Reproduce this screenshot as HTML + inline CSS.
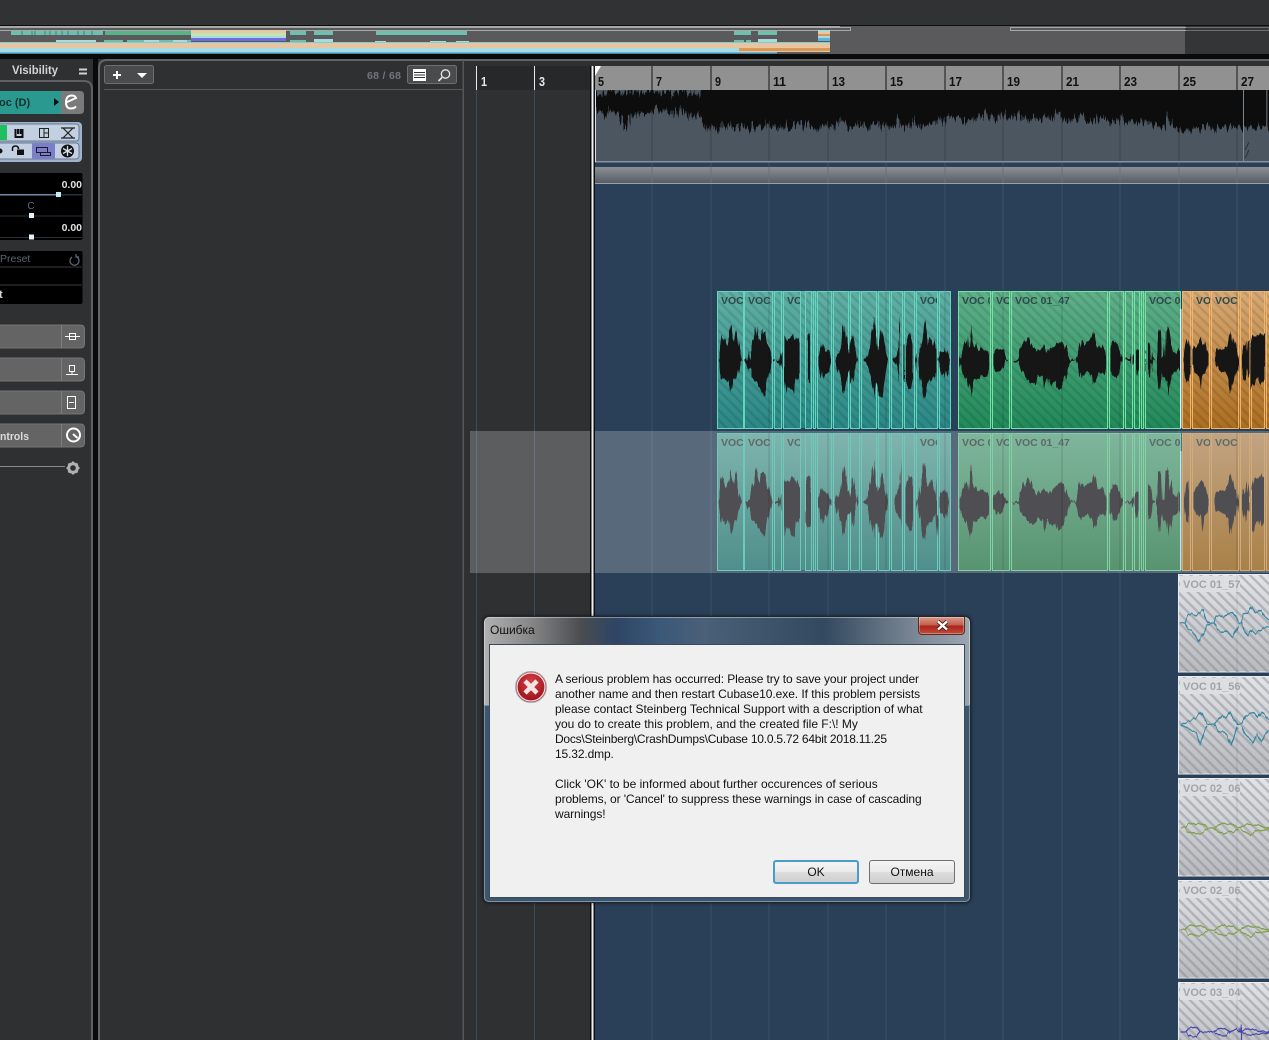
<!DOCTYPE html>
<html><head><meta charset="utf-8"><style>
html,body{margin:0;padding:0;background:#2f3032;width:1269px;height:1040px;overflow:hidden}
svg{position:absolute;left:0;top:0}
text{font-family:"Liberation Sans",sans-serif}
#dlg{position:absolute;left:483px;top:616px;width:488px;height:287px;box-sizing:border-box;border-radius:6px;border:1px solid #20262c;box-shadow:0 0 3px rgba(0,0,0,.6),inset 0 0 0 1px rgba(255,255,255,.4);
background:linear-gradient(90deg,#b0b0b0 0,#8a8a8a 9%,#4a4c50 20%,#2e4564 27%,#3a5878 36%,#4a6078 45%,#33495f 70%,#7f8c99 90%,#9aa6b2 100%);font-family:"Liberation Sans","Noto Sans CJK SC",sans-serif;color:#000}
#f1{position:absolute;left:0;top:88px;width:100%;bottom:0;border-radius:0 0 5px 5px;background:#3b5670;box-shadow:inset 0 0 0 1px rgba(255,255,255,.35)}
#t{position:absolute;left:6px;top:6px;font-size:12px;line-height:15px;color:#111}
#x{position:absolute;left:434px;top:0;width:47px;height:18px;border:1px solid #5c2a22;border-top:0;border-radius:0 0 4px 4px;box-sizing:border-box;background:linear-gradient(180deg,#d99a8c 0,#c4604e 45%,#a8241a 55%,#c44c3a 100%);box-shadow:inset 0 0 0 1px rgba(255,255,255,.3)}
#c{position:absolute;left:5px;top:27px;width:476px;height:254px;box-sizing:border-box;background:#f0f0f0;border:1px solid #3c4a58}
#c div.l{position:absolute;left:65px;white-space:nowrap;font-size:12px;line-height:15px;color:#111}
.b{position:absolute;top:215px;width:86px;height:24px;box-sizing:border-box;border-radius:3px;text-align:center;font-size:12px;line-height:22px;color:#111;background:linear-gradient(180deg,#f4f4f4 0,#ebebeb 48%,#dcdcdc 52%,#cfcfcf 100%)}
</style></head><body>
<svg width="1269" height="1040" viewBox="0 0 1269 1040" xmlns="http://www.w3.org/2000/svg">
<defs>
<filter id="jag" filterUnits="userSpaceOnUse" x="590" y="60" width="690" height="530"><feTurbulence type="fractalNoise" baseFrequency="0.55 0.004" numOctaves="2" seed="4" result="n"/><feDisplacementMap in="SourceGraphic" in2="n" scale="16" xChannelSelector="R" yChannelSelector="G"/></filter>
<filter id="jagw" filterUnits="userSpaceOnUse" x="700" y="280" width="580" height="300"><feTurbulence type="fractalNoise" baseFrequency="0.45 0.004" numOctaves="1" seed="4" result="n"/><feDisplacementMap in="SourceGraphic" in2="n" scale="8" xChannelSelector="R" yChannelSelector="G"/></filter>
<filter id="jag2" filterUnits="userSpaceOnUse" x="1170" y="570" width="110" height="480"><feTurbulence type="fractalNoise" baseFrequency="0.4 0.004" numOctaves="1" seed="9" result="n"/><feDisplacementMap in="SourceGraphic" in2="n" scale="4" xChannelSelector="R" yChannelSelector="G"/></filter>
<clipPath id="topc"><rect x="596" y="90" width="673" height="72"/></clipPath>
<linearGradient id="gt" x1="0" y1="0" x2="0" y2="1"><stop offset="0" stop-color="#60b0a4"/><stop offset="1" stop-color="#2a8886"/></linearGradient>
<linearGradient id="gg" x1="0" y1="0" x2="0" y2="1"><stop offset="0" stop-color="#60b08a"/><stop offset="1" stop-color="#218a5a"/></linearGradient>
<linearGradient id="go" x1="0" y1="0" x2="0" y2="1"><stop offset="0" stop-color="#d8aa76"/><stop offset="1" stop-color="#ac6e20"/></linearGradient>
<linearGradient id="lt" x1="0" y1="0" x2="0" y2="1"><stop offset="0" stop-color="#80b4ae"/><stop offset="1" stop-color="#4f8f8b"/></linearGradient>
<linearGradient id="lg" x1="0" y1="0" x2="0" y2="1"><stop offset="0" stop-color="#7fb69c"/><stop offset="1" stop-color="#589470"/></linearGradient>
<linearGradient id="lo" x1="0" y1="0" x2="0" y2="1"><stop offset="0" stop-color="#c2a482"/><stop offset="1" stop-color="#a98048"/></linearGradient>
<linearGradient id="gr" x1="0" y1="0" x2="0" y2="1"><stop offset="0" stop-color="#e2e4e8"/><stop offset="1" stop-color="#b8babe"/></linearGradient>
<linearGradient id="band" x1="0" y1="0" x2="0" y2="1"><stop offset="0" stop-color="#8c9094"/><stop offset="1" stop-color="#565d66"/></linearGradient>
<pattern id="h" width="7" height="7" patternUnits="userSpaceOnUse" patternTransform="rotate(-45)"><rect width="2.5" height="7" fill="#000" fill-opacity=".1"/></pattern>
<pattern id="hg" width="7" height="7" patternUnits="userSpaceOnUse" patternTransform="rotate(-45)"><rect width="2.5" height="7" fill="#80848c" fill-opacity=".42"/></pattern>
<path id="bt" d="M717.5 291.5h26v137h-26zM744.5 291.5h28v137h-28zM774.5 291.5h7v137h-7zM783.5 291.5h17v137h-17zM805.500 291.5h6v137h-6zM813.500 291.5h2v137h-2zM817.500 291.5h14v137h-14zM833.500 291.5h15v137h-15zM850.500 291.5h9v137h-9zM861.500 291.5h15v137h-15zM878.500 291.5h11v137h-11zM891.500 291.5h11v137h-11zM904.500 291.5h10v137h-10zM916.500 291.5h21v137h-21zM939.500 291.5h11v137h-11z"/>
<path id="bg" d="M958.500 291.5h32v137h-32zM992.500 291.5h17v137h-17zM1011.500 291.5h96v137h-96zM1109.500 291.5h14v137h-14zM1125.500 291.5h7v137h-7zM1134.500 291.5h5v137h-5zM1141.500 291.5h2v137h-2zM1145.500 291.5h35v137h-35z"/>
<path id="bo" d="M1182.500 291.5h8v137h-8zM1192.500 291.5h17v137h-17zM1211.500 291.5h27v137h-27zM1240.500 291.5h9v137h-9zM1251.500 291.5h13v137h-13zM1266.500 291.5h6v137h-6z"/>
<path id="wave" d="M718 360L720 350 722 335 724 338 726 346 728 340 730 330 731 326 732 336 734 342 736 330 738 345 740 355 742 360 740 366 738 372 736 380 734 378 732 390 731 393 730 388 728 378 726 382 724 378 722 380 720 370ZM745 360L749 358 750 352 752 345 754 340 756 326 758 335 760 342 762 332 764 330 766 340 768 345 770 350 772 360 770 370 768 378 766 385 764 395 762 392 760 388 758 385 756 382 752 378 750 368 745 361ZM775 359H779L781 350V370L779 361H775ZM784 360V337L786 340 790 338 793 335 795 340 797 338 800 346V374L798 380 796 378 794 395 790 390 787 385 785 394 784 382ZM806 336L808 334 811 337V383L808 385 806 380ZM818 355L820 351 823 345 825 352 828 350 831 358V362L828 372 825 375 823 381 820 370 818 365ZM834 360L836 356 840 350 842 340 844 324 846 335 848 348 850 355 852 345 853 335 855 345 857 352 858 360 856 368 854 375 852 385 851 370 848 372 846 382 844 393 842 385 840 378 836 366ZM862 360L866 358 868 350 870 345 872 330 874 317 876 335 878 350 880 345 882 330 884 342 886 352 888 360 886 370 884 385 882 397 880 395 878 385 876 380 874 398 872 385 870 375 866 362ZM893 360L896 352 899 347 900 340 901 317V396L900 378 896 368ZM905 345L908 338 910 333 912 340 913 345V378L911 390 908 385 905 380ZM917 360L919 350 921 340 923 330 924 320 926 335 928 345 930 340 932 337 934 345 936 355 937 335V395L936 372 934 375 932 380 928 382 926 388 924 398 921 385 919 375ZM939 360L941 352 945 347 948 355 950 360 948 366 945 377 941 370ZM959 360L961 352 964 345 966 340 968 348 970 322 972 340 975 345 978 350 981 347 984 349 988 352 990 355V370L986 377 982 375 978 378 974 380 970 396 967 380 964 378 961 370ZM993 355L998 349 1003 352 1005 357 1009 360 1005 362 1002 370 998 373 993 365ZM1012 360H1018L1020 350 1024 342 1027 340 1029 336 1032 345 1036 352 1040 350 1044 346 1048 352 1052 348 1056 345 1060 340 1064 342 1067 350 1069 358 1074 360 1069 362 1067 372 1064 382 1060 389 1058 388 1056 380 1052 385 1048 378 1044 390 1042 378 1038 376 1034 384 1029 380 1026 376 1022 372 1018 362 1012 361ZM1075 360L1078 350 1080 340 1084 346 1088 342 1091 340 1094 332 1096 340 1098 348 1102 345 1105 350 1107 358V368L1104 374 1100 372 1097 378 1094 387 1092 378 1088 372 1084 375 1080 378 1078 370ZM1110 350L1113 342 1117 343 1120 350 1123 360 1120 370 1116 378 1113 377 1110 370ZM1126 359H1132L1133 354V366L1132 361H1126ZM1135 352L1137 349 1139 352V370L1137 376 1135 368ZM1147 345L1149 342 1151 345 1152 358 1156 360 1152 362 1151 375 1149 378 1147 370ZM1157 358L1158 345 1159 328 1161 332 1162 358H1164L1165 330 1167 325 1169 330 1171 345 1173 352 1176 355 1180 350V370L1176 372 1172 375 1170 385 1168 396 1166 380 1163 378 1162 372 1160 390 1159 385 1157 375ZM1184 360L1186 345 1188 338 1190 350V372L1188 382 1186 378ZM1193 350L1197 345 1200 340 1202 337 1204 342 1207 350 1209 360 1207 370 1204 375 1202 390 1200 375 1196 372 1193 365ZM1213 360L1216 350 1220 348 1224 349 1228 342 1230 335 1231 331 1233 340 1236 350 1238 360 1236 370 1234 378 1231 393 1229 378 1224 372 1220 370 1216 368ZM1242 358L1245 345 1248 340 1249 352V368L1247 378 1245 380 1242 365ZM1252 345L1254 335 1258 337 1261 332 1264 335V380L1261 385 1258 378 1254 385 1252 390Z"/>
</defs>

<!-- top bars -->
<rect width="1269" height="25" fill="#313234"/>
<rect y="25" width="1269" height="1" fill="#0e0e0e"/>
<rect y="26" width="1185" height="28" fill="#5a5a5c"/>
<rect x="1185" y="26" width="84" height="28" fill="#343537"/>
<rect y="54" width="1269" height="5" fill="#0b0b0b"/>
<rect y="26" width="840" height="1.4" fill="#a8a8a8"/>
<path d="M0 27.5H850.5V30.5H0M1269 27.5H1010.5V30.5H1269" fill="none" stroke="#a6a8a8"/>
<path d="M1186 27.5H1269V30.5H1186" fill="none" stroke="#6c6e70"/>
<!-- overview -->
<rect x="11" y="31" width="92" height="4" fill="#6dc0b0"/>
<path d="M22 31v4M32 31v4M35 31v4M45 31v4M50 31v4M56 31v4M62 31v4M68 31v4M78 31v4M84 31v4M92 31v4" stroke="#4a7a72"/>
<rect x="105" y="31" width="86" height="4" fill="#58b488"/>
<rect x="191" y="30" width="95" height="3" fill="#e8c8a4"/><rect x="191" y="33" width="95" height="3" fill="#c4e2b4"/><rect x="191" y="36" width="95" height="2" fill="#a8dcdc"/><rect x="191" y="38" width="95" height="3" fill="#6c6ce0"/>
<path d="M290 31h16v4h-16zM314 31h19v4h-19zM376 31h91v4h-91zM734 31h17v4h-17zM758 31h19v4h-19z" fill="#6dc0b0"/>
<path d="M104 40h19v3h-19zM127 40h17v3h-17zM159 40h14v3h-14zM187 40h4v3h-4zM290 40h16v3h-16zM734 40h10v3h-10zM746 40h5v3h-5z" fill="#6dc0b0"/>
<path d="M56 40h40v3h-40zM144 40h15v3h-15zM173 40h14v3h-14zM314 39h19v4h-19zM375 41h11v2h-11zM430 41h16v2h-16zM456 41h13v2h-13zM758 39h19v4h-19z" fill="#a4dce0"/>
<rect x="818" y="30" width="12" height="2" fill="#a8dcdc"/><rect x="818" y="32" width="12" height="2" fill="#e8c8a4"/><rect x="818" y="34" width="12" height="2" fill="#d89858"/><rect x="818" y="36" width="12" height="2" fill="#a8dcdc"/><rect x="818" y="38" width="12" height="3" fill="#5cb4dc"/>
<rect y="42" width="830" height="1" fill="#7cd0d0"/>
<rect y="43" width="830" height="5" fill="#e8c4a0"/>
<rect y="48" width="739" height="4" fill="#a2dce8"/>
<rect x="739" y="48" width="91" height="3" fill="#d89858"/><rect x="739" y="51" width="91" height="1" fill="#e8c4a0"/>
<rect y="52" width="777" height="1.4" fill="#60b8e0"/>

<!-- left panel -->
<rect x="0" y="60" width="92" height="980" fill="#2f3032"/>
<path d="M0 81H84Q92 81 92 89V1040" fill="none" stroke="#5f6062" stroke-width="2"/>
<rect x="93" y="59" width="5" height="981" fill="#0a0a0a"/>
<path d="M99 1040V68Q99 60 107 60H1269" fill="none" stroke="#646566" stroke-width="2"/>
<text x="12" y="74" font-size="11.500" font-weight="bold" fill="#d4d4d4" textLength="46" lengthAdjust="spacingAndGlyphs">Visibility</text>
<path d="M79 69.5h8M79 73.5h8" stroke="#d0d0d0" stroke-width="2"/>
<rect x="-4" y="91" width="65" height="23" fill="#2a9a90"/>
<text x="-1" y="106" font-size="11" font-weight="bold" fill="#16302e">oc (D)</text>
<path d="M54 98l5 4-5 4z" fill="#111"/>
<path d="M61 91h19q4 0 4 4v15q0 4-4 4H61z" fill="#7a7a7a"/>
<path d="M66 102.500l10-4.500q-1-2.500-4-2.500-6 0-6 7 0 6 5 6 3 0 5-2" fill="none" stroke="#fff" stroke-width="2"/>
<rect x="-4" y="122" width="86" height="40" rx="4" fill="#9fb3cc"/>
<rect x="-4" y="124" width="83" height="17" rx="3" fill="#c3d0e2" stroke="#6a7a90"/>
<rect x="-4" y="143" width="83" height="16" rx="3" fill="#c3d0e2" stroke="#6a7a90"/>
<rect x="-2" y="125" width="9" height="15" fill="#1fbf62"/>
<path d="M15.500 129v8h7v-8M18 129v5M20.500 129v5" fill="none" stroke="#111" stroke-width="2"/>
<path d="M39.500 128.500h9v9h-9zM44 128.500v9M44 133h4.500" fill="none" stroke="#222"/>
<path d="M61 128h14M61 138h14M63 128l10 10M73 128l-10 10" fill="none" stroke="#222" stroke-width="1.200"/>
<rect x="32" y="143" width="23" height="16" rx="2" fill="#7b7fc8"/>
<path d="M36.500 147.500h11v5h-11zM40.500 152.500h10v3h-10z" fill="none" stroke="#1a1a2a"/>
<circle cx="0" cy="151" r="2.500" fill="#111"/>
<path d="M12.500 151v-2.500q0-2.500 3-2.500t3 3" fill="none" stroke="#111" stroke-width="1.500"/><rect x="17" y="149.500" width="7" height="5.500" fill="#111"/>
<circle cx="67.500" cy="151" r="6.500" fill="#111"/>
<path d="M67.500 146v10M63 148.500l9 5M72 148.500l-9 5" stroke="#d8e0ee" stroke-width="1.300"/>
<rect x="-4" y="173" width="86.500" height="67" rx="2" fill="#000"/>
<text x="82" y="188" font-size="10.500" font-weight="bold" fill="#e0e0e0" text-anchor="end">0.00</text>
<text x="82" y="231" font-size="10.500" font-weight="bold" fill="#e0e0e0" text-anchor="end">0.00</text>
<text x="31" y="209" font-size="10" fill="#5a6c88" text-anchor="middle">C</text>
<rect x="0" y="194" width="58" height="1.500" fill="#6f8ca8"/><rect x="58" y="194" width="24" height="1.500" fill="#2a3038"/>
<rect x="0" y="215.500" width="82" height="1" fill="#2a3038"/><rect x="0" y="237" width="82" height="1" fill="#2a3038"/>
<rect x="56" y="192" width="5" height="5" fill="#c8eaf4"/><rect x="29" y="213" width="5" height="5" fill="#e4f2f6"/><rect x="29" y="234.500" width="5" height="5" fill="#e4f2f6"/>
<rect x="-4" y="251" width="86.500" height="53" rx="2" fill="#000"/>
<path d="M0 267h82M0 285h82" stroke="#3a3a3a"/>
<text x="0" y="262" font-size="10.500" fill="#5c6472">Preset</text>
<path d="M72 256a4.500 4.500 0 1 0 4-.500M76 253v3h3" fill="none" stroke="#5f6a7a" stroke-width="1.200" transform="translate(0,1)"/>
<text x="-1" y="298" font-size="11" font-weight="bold" fill="#d8d8d8">t</text>
<g fill="#646464">
<path d="M-4 325H80q4.500 0 4.500 4v15q0 4-4.500 4H-4z" stroke="#757575"/>
<path d="M-4 358H80q4.500 0 4.500 4v15q0 4-4.500 4H-4z" stroke="#757575"/>
<path d="M-4 391H80q4.500 0 4.500 4v15q0 4-4.500 4H-4z" stroke="#757575"/>
<path d="M-4 424H80q4.500 0 4.500 4v15q0 4-4.500 4H-4z" stroke="#757575"/>
</g>
<path d="M61.500 325v23M61.500 358v23M61.500 391v23M61.500 424v23" stroke="#7e7e7e"/>
<path d="M65 336.500h15M69.500 333.500h6v6h-6z" fill="none" stroke="#fff"/>
<path d="M66 374.500h12M69.500 365.500h5v6h-5zM72 371.500v3" fill="none" stroke="#fff"/>
<path d="M67.500 396.500h8v12h-8zM69 402.500h5" fill="none" stroke="#fff"/>
<circle cx="73.500" cy="435" r="6.500" fill="none" stroke="#fff" stroke-width="2"/><path d="M73 434l4.500 4" stroke="#fff" stroke-width="2"/>
<text x="0" y="440" font-size="11" font-weight="bold" fill="#dcdcdc" textLength="29" lengthAdjust="spacingAndGlyphs">ntrols</text>
<rect x="0" y="466" width="65" height="1" fill="#8a8a8a"/>
<circle cx="73" cy="468" r="4.300" fill="none" stroke="#b0b0b0" stroke-width="3"/>
<path d="M73 461.500v2M73 472.500v2M66.500 468h2M77.500 468h2M68.500 463.500l1.500 1.500M76 471l1.500 1.500M77.500 463.500l-1.500 1.500M70 471l-1.500 1.500" stroke="#b0b0b0" stroke-width="2"/>

<!-- middle panel -->
<rect x="104.500" y="65.500" width="49" height="18" rx="2" fill="#4a4b4d" stroke="#6e6e6e"/>
<path d="M113 75h8M117 71v8" stroke="#fff" stroke-width="2"/>
<path d="M137 73h10l-5 5z" fill="#fff"/>
<text x="367" y="79" font-size="10.500" font-weight="bold" fill="#70757c" textLength="34">68 / 68</text>
<rect x="407.500" y="65.500" width="49" height="18" rx="2" fill="#4a4b4d" stroke="#6e6e6e"/>
<rect x="413" y="69" width="13" height="12" fill="#fff"/><path d="M414 72.500h11M414 75h11M414 77.500h11" stroke="#333" stroke-width=".9"/>
<circle cx="445.500" cy="74" r="4.200" fill="none" stroke="#e8e8e8" stroke-width="1.300"/><path d="M442 77.500l-3.500 3.500" stroke="#e8e8e8" stroke-width="1.600"/>
<rect x="104" y="89" width="359" height="1" fill="#595a5c"/>
<rect x="462.500" y="60" width="1.500" height="980" fill="#55565a"/>

<!-- arrange -->
<rect x="464" y="61" width="805" height="5" fill="#2f3032"/>
<rect x="476" y="66" width="116" height="24" fill="#272829"/>
<rect x="594" y="66" width="675" height="24" fill="#919191"/>
<rect x="464" y="90" width="128" height="950" fill="#2f3032"/>
<rect x="595" y="90" width="674" height="950" fill="#2a3f58"/>
<path d="M476.500 90V1040M534.500 90V1040" stroke="#3c4a5e"/>
<path d="M652 90V1040M711 90V1040M769 90V1040M828 90V1040M886 90V1040M945 90V1040M1003 90V1040M1062 90V1040M1120 90V1040M1179 90V1040M1237 90V1040" stroke="#3b5069"/>
<rect x="595" y="90" width="674" height="72" fill="#4c5661"/>
<path d="M652 90V162M711 90V162M769 90V162M828 90V162M886 90V162M945 90V162M1003 90V162M1062 90V162M1120 90V162M1179 90V162M1237 90V162" stroke="#3c434c"/>
<g clip-path="url(#topc)"><g filter="url(#jag)"><path fill="#0d0e0e" d="M596 80L596 107 600 112 604 109 608 118 612 111 616 116 620 113 624 126 627 131 629 118 634 116 640 116 645 112 650 115 655 106 660 112 664 110 668 116 672 110 676 118 680 108 684 117 688 111 692 119 696 112 700 116 703 122 706 131 709 125 711 132 714 123 718 130 721 119 724 128 728 122 732 129 736 126 740 129 744 125 748 131 752 123 756 128 760 127 764 130 767 118 770 127 774 129 778 125 782 130 786 122 790 129 794 127 798 123 802 128 806 121 810 129 814 125 818 131 822 122 826 129 830 126 834 130 838 118 842 128 846 125 850 130 854 123 858 128 862 119 866 130 870 125 874 127 878 117 882 129 886 122 890 126 894 125 898 116 902 129 906 122 910 127 914 116 918 128 922 123 926 126 930 122 934 125 938 118 942 124 946 116 950 117 954 118 958 119 962 120 966 122 970 117 974 123 978 115 982 120 986 111 990 119 994 116 998 122 1002 112 1006 120 1010 116 1014 122 1018 112 1022 120 1026 116 1030 123 1034 114 1038 121 1042 118 1046 120 1050 116 1054 123 1058 112 1062 121 1066 118 1070 123 1074 117 1078 124 1082 114 1086 123 1090 120 1094 124 1098 116 1102 124 1106 118 1110 122 1114 120 1118 123 1122 116 1126 125 1130 120 1134 124 1138 122 1142 124 1146 123 1150 126 1154 123 1158 127 1162 126 1164 128 1166 112 1168 115 1172 125 1176 128 1179 131 1184 128 1190 130 1196 127 1202 129 1208 126 1214 130 1220 125 1226 129 1232 126 1238 128 1242 131 1246 126 1250 129 1256 126 1262 129 1269 127V80H702V84L698 96 695 90 690 95 687 90 682 94 679 90 672 96 669 90 664 95 661 90 656 94 652 90 647 93 643 90 638 96 634 90 628 94 624 90 618 96 614 90 608 94 604 90 600 97 598 90Z"/></g></g>
<rect x="1243" y="90" width="1" height="72" fill="#7c8692"/>
<path d="M1245 150l4-8M1245 158l4-8" stroke="#30363e" stroke-width="1.200"/>
<rect x="595" y="161" width="674" height="1.500" fill="#8a929c"/>
<rect x="594" y="167" width="675" height="16" fill="url(#band)"/>
<rect x="594" y="183" width="675" height="1" fill="#99a0a8"/>
<path d="M652 167V183M711 167V183M769 167V183M828 167V183M886 167V183M945 167V183M1003 167V183M1062 167V183M1120 167V183M1179 167V183M1237 167V183" stroke="#6c7278"/>

<!-- ruler -->
<path d="M476.500 66V90M534.500 66V90" stroke="#e8e8e8"/>
<path d="M652 66V90M711 66V90M769 66V90M828 66V90M886 66V90M945 66V90M1003 66V90M1062 66V90M1120 66V90M1179 66V90M1237 66V90" stroke="#161616"/>
<g font-size="12.500" font-weight="bold" fill="#e8e8e8"><text x="481" y="86" textLength="6" lengthAdjust="spacingAndGlyphs">1</text><text x="539" y="86" textLength="6" lengthAdjust="spacingAndGlyphs">3</text></g>
<g font-size="12.500" font-weight="bold" fill="#111">
<text x="598" y="86" textLength="6" lengthAdjust="spacingAndGlyphs">5</text><text x="656" y="86" textLength="6" lengthAdjust="spacingAndGlyphs">7</text><text x="715" y="86" textLength="6" lengthAdjust="spacingAndGlyphs">9</text><text x="773" y="86" textLength="13" lengthAdjust="spacingAndGlyphs">11</text><text x="832" y="86" textLength="13" lengthAdjust="spacingAndGlyphs">13</text><text x="890" y="86" textLength="13" lengthAdjust="spacingAndGlyphs">15</text><text x="949" y="86" textLength="13" lengthAdjust="spacingAndGlyphs">17</text><text x="1007" y="86" textLength="13" lengthAdjust="spacingAndGlyphs">19</text><text x="1066" y="86" textLength="13" lengthAdjust="spacingAndGlyphs">21</text><text x="1124" y="86" textLength="13" lengthAdjust="spacingAndGlyphs">23</text><text x="1183" y="86" textLength="13" lengthAdjust="spacingAndGlyphs">25</text><text x="1241" y="86" textLength="13" lengthAdjust="spacingAndGlyphs">27</text>
</g>
<path d="M594 66h7l-6 10z" fill="#fff"/>

<!-- ghost band -->
<rect x="470" y="431" width="799" height="142" fill="#fff" fill-opacity=".22"/>

<!-- regions row 1 -->
<rect x="717" y="291" width="234" height="137" fill="url(#gt)"/>
<rect x="958" y="291" width="223" height="137" fill="url(#gg)"/>
<rect x="1182" y="291" width="87" height="137" fill="url(#go)"/>
<rect x="717" y="291" width="552" height="137" fill="url(#h)"/>
<rect x="952" y="291" width="6" height="138" fill="#2a3f58"/>
<use href="#bt" fill="none" stroke="#62d6c0"/>
<use href="#bg" fill="none" stroke="#72e4a4"/>
<use href="#bo" fill="none" stroke="#f2b468"/>
<!-- regions row 2 -->
<rect x="717" y="433" width="234" height="137" fill="url(#lt)"/>
<rect x="958" y="433" width="223" height="137" fill="url(#lg)"/>
<rect x="1182" y="433" width="87" height="137" fill="url(#lo)"/>
<use href="#bt" y="142" fill="none" stroke="#6ccaba"/>
<use href="#bg" y="142" fill="none" stroke="#82d0a6"/>
<use href="#bo" y="142" fill="none" stroke="#d0ac7c"/>
<g filter="url(#jagw)">
<use href="#wave" fill="#141616"/>
<use href="#wave" y="142" fill="#505052"/>
</g>
<path d="M769 291V570M828 291V570M886 291V570M945 291V570M1003 291V570M1062 291V570M1120 291V570M1237 291V570" stroke="#000" stroke-opacity=".16"/>
<rect x="1180" y="309" width="1.500" height="119" fill="#dff5ea"/><rect x="1180" y="451" width="1.500" height="119" fill="#c8e4d4"/>

<!-- labels row 1 -->
<g font-size="10.500" font-weight="bold" fill="#2e4a4a">
<svg x="717" y="291" width="26" height="20"><text x="4" y="13">VOC</text></svg>
<svg x="744" y="291" width="28" height="20"><text x="4" y="13">VOC</text></svg>
<svg x="783" y="291" width="17" height="20"><text x="4" y="13">VOC</text></svg>
<svg x="916" y="291" width="21" height="20"><text x="4" y="13">VOC</text></svg>
<svg x="958" y="291" width="32" height="20"><text x="4" y="13">VOC 01_47</text></svg>
<svg x="992" y="291" width="17" height="20"><text x="4" y="13">VOC</text></svg>
<svg x="1011" y="291" width="97" height="20"><text x="4" y="13">VOC 01_47</text></svg>
<svg x="1145" y="291" width="35" height="20"><text x="4" y="13">VOC 01_47</text></svg>
<svg x="1192" y="291" width="18" height="20"><text x="4" y="13">VOC</text></svg>
<svg x="1211" y="291" width="28" height="20"><text x="4" y="13">VOC</text></svg>
</g>
<!-- labels row 2 -->
<g font-size="10.500" font-weight="bold" fill="#5c6a68">
<svg x="717" y="433" width="26" height="20"><text x="4" y="13">VOC</text></svg>
<svg x="744" y="433" width="28" height="20"><text x="4" y="13">VOC</text></svg>
<svg x="783" y="433" width="17" height="20"><text x="4" y="13">VOC</text></svg>
<svg x="916" y="433" width="21" height="20"><text x="4" y="13">VOC</text></svg>
<svg x="958" y="433" width="32" height="20"><text x="4" y="13">VOC 01_47</text></svg>
<svg x="992" y="433" width="17" height="20"><text x="4" y="13">VOC</text></svg>
<svg x="1011" y="433" width="97" height="20"><text x="4" y="13">VOC 01_47</text></svg>
<svg x="1145" y="433" width="35" height="20"><text x="4" y="13">VOC 01_47</text></svg>
<svg x="1192" y="433" width="18" height="20"><text x="4" y="13">VOC</text></svg>
<svg x="1211" y="433" width="28" height="20"><text x="4" y="13">VOC</text></svg>
</g>

<!-- gray regions -->
<g stroke="#eceef0">
<rect x="1178.500" y="574.500" width="95" height="97.500" fill="url(#gr)"/>
<rect x="1178.500" y="676.500" width="95" height="97.500" fill="url(#gr)"/>
<rect x="1178.500" y="778.500" width="95" height="97.500" fill="url(#gr)"/>
<rect x="1178.500" y="880.500" width="95" height="97.500" fill="url(#gr)"/>
<rect x="1178.500" y="982.500" width="95" height="70" fill="url(#gr)"/>
</g>
<path d="M1179 575h90v97h-90zM1179 677h90v97h-90zM1179 779h90v97h-90zM1179 881h90v97h-90zM1179 983h90v57h-90z" fill="url(#hg)"/>
<path d="M1180 576h60v16h-60zM1180 678h60v16h-60zM1180 780h60v16h-60zM1180 882h60v16h-60zM1180 984h60v16h-60z" fill="#dcdee2"/>
<path d="M1237 575V1040" stroke="#000" stroke-opacity=".1"/>
<g font-size="11" font-weight="bold" fill="#a2a4a8">
<text x="1183" y="588">VOC 01_57</text><text x="1183" y="690">VOC 01_56</text><text x="1183" y="792">VOC 02_06</text><text x="1183" y="894">VOC 02_06</text><text x="1183" y="996">VOC 03_04</text>
</g>
<g fill="none" stroke-width="1.200" filter="url(#jag2)">
<path stroke="#37859e" d="M1180 623H1185L1188 616 1192 614 1196 616 1200 613 1203 610 1205 617 1207 621 1210 623H1214L1216 617 1220 615 1224 617 1228 614 1232 612 1235 616 1238 622 1242 623 1244 615 1248 613 1252 607 1255 612 1258 613 1261 610 1264 616 1269 620M1185 623L1188 630 1192 631 1195 635 1199 642 1202 636 1205 631 1207 625 1210 623M1214 623L1217 629 1222 632 1226 631 1230 635 1233 637 1236 630 1238 625M1242 623L1245 631 1248 636 1252 630 1256 634 1260 631 1264 628 1269 626"/>
<path stroke="#37859e" d="M1180 725L1186 723 1190 721 1194 719 1198 716 1201 712 1204 718 1207 724H1214L1218 720 1222 715 1226 718 1230 712 1233 718 1237 724 1242 724 1246 716 1250 714 1254 712 1258 718 1262 712 1266 716 1269 720M1180 725L1186 727 1192 731 1196 732 1200 744 1204 732 1207 726M1214 725L1219 732 1223 731 1227 735 1231 745 1234 737 1237 727M1242 726L1245 734 1249 738 1253 743 1257 734 1261 742 1265 735 1269 730"/>
<path stroke="#7e9e42" d="M1180 828H1185L1189 824 1193 823 1197 824 1201 823 1205 825 1208 828H1214L1218 825 1224 823 1228 825 1233 824 1236 827 1240 828 1244 825 1250 824 1254 826 1258 825 1264 827 1269 828M1185 828L1189 833 1194 832 1198 834 1203 832 1208 829M1214 829L1218 832 1224 834 1229 832 1234 832 1238 829M1240 829L1245 832 1250 835 1256 831 1262 830 1269 829"/>
<path stroke="#7e9e42" d="M1180 930H1185L1189 926 1193 925 1197 926 1201 925 1205 927 1208 930H1214L1218 927 1224 925 1228 927 1233 926 1236 929 1240 930 1244 927 1250 926 1254 928 1258 927 1264 929 1269 930M1185 930L1189 935 1194 934 1198 936 1203 934 1208 931M1214 931L1218 934 1224 936 1229 934 1234 934 1238 931M1240 931L1245 934 1250 937 1256 933 1262 932 1269 931"/>
<path stroke="#4444aa" d="M1180 1032H1186L1189 1028 1193 1027 1197 1028 1200 1032H1214L1218 1029 1224 1028 1230 1032 1236 1029 1240 1032 1241 1024V1040M1241 1032L1246 1029 1252 1029 1258 1031 1269 1032M1186 1032L1190 1036 1196 1037 1200 1032M1214 1032L1220 1035 1226 1036 1230 1032M1241 1032L1248 1035 1256 1034 1269 1033"/>
</g>

<!-- cursor -->
<rect x="590" y="66" width="2" height="974" fill="#0c0c0c"/>
<rect x="591.500" y="66" width="2" height="974" fill="#f0f0f0"/>
<rect x="593.500" y="66" width="1.500" height="974" fill="#0e1014"/>
<rect x="595" y="90" width="1" height="72" fill="#d8dce0"/>
</svg>

<div id="dlg">
<div id="f1"></div>
<div id="t">Ошибка</div>
<div id="x"><svg style="left:17px;top:3px" width="13" height="11" viewBox="0 0 13 11"><path d="M2 1.500l9 8M11 1.500l-9 8" stroke="#3a1a14" stroke-width="4"/><path d="M2 1.500l9 8M11 1.500l-9 8" stroke="#fff" stroke-width="2.400"/></svg></div>
<div id="c">
<svg style="left:23px;top:24px" width="36" height="36" viewBox="0 0 36 36"><defs><radialGradient id="rd" cx=".5" cy=".35" r=".7"><stop offset="0" stop-color="#d84048"/><stop offset="1" stop-color="#8e0c14"/></radialGradient></defs><circle cx="18" cy="18" r="15.500" fill="url(#rd)" stroke="#a8a8a8" stroke-width="1"/><circle cx="18" cy="18" r="14" fill="none" stroke="#f4e4e4" stroke-width="1.200"/><path d="M12 12l12 12M24 12L12 24" stroke="#f0e4e4" stroke-width="4.500"/></svg>
<div class="l" style="top:27px;letter-spacing:-.1px">A serious problem has occurred: Please try to save your project under</div>
<div class="l" style="top:42px;letter-spacing:-.056px">another name and then restart Cubase10.exe. If this problem persists</div>
<div class="l" style="top:57px;letter-spacing:-.015px">please contact Steinberg Technical Support with a description of what</div>
<div class="l" style="top:72px;letter-spacing:-.01px">you do to create this problem, and the created file F:\! My</div>
<div class="l" style="top:87px;letter-spacing:-.23px">Docs\Steinberg\CrashDumps\Cubase 10.0.5.72 64bit 2018.11.25</div>
<div class="l" style="top:102px;letter-spacing:-.13px">15.32.dmp.</div>
<div class="l" style="top:132px;letter-spacing:0">Click 'OK' to be informed about further occurences of serious</div>
<div class="l" style="top:147px;letter-spacing:-.1px">problems, or 'Cancel' to suppress these warnings in case of cascading</div>
<div class="l" style="top:162px;letter-spacing:-.1px">warnings!</div>
<div class="b" style="left:283px;border:2px solid #4b9cc8;line-height:20px">OK</div>
<div class="b" style="left:379px;border:1px solid #707070">Отмена</div>
</div>
</div>
</body></html>
